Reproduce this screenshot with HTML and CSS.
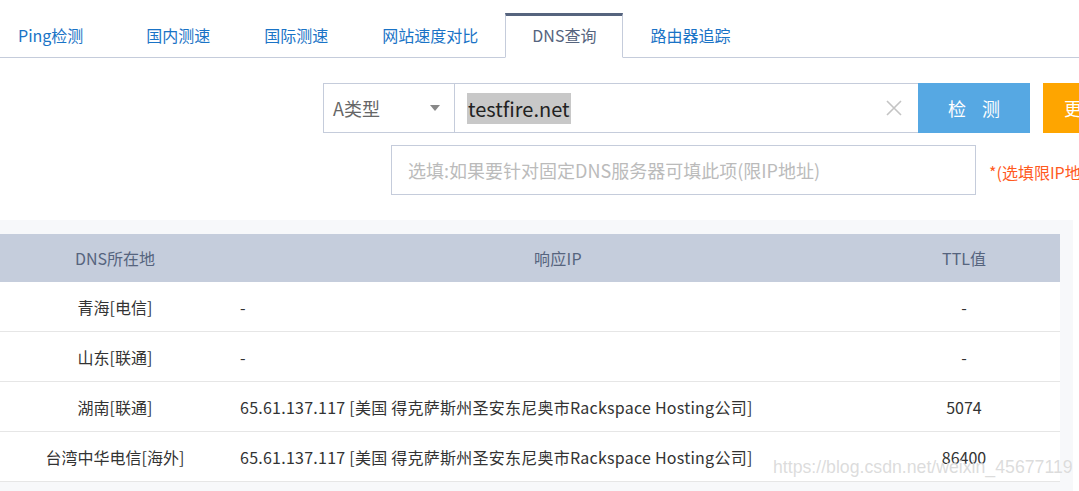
FILE: index.html
```html
<!DOCTYPE html>
<html lang="zh-CN">
<head>
    <meta charset="UTF-8">
    <meta name="viewport" content="width=device-width, initial-scale=1.0">
    <title>DNS查询</title>
    <link rel="stylesheet" href="styles.css">
</head>
<body>
    <ul class="tabs">
        <li class="tab first">Ping检测</li>
        <li class="tab">国内测速</li>
        <li class="tab">国际测速</li>
        <li class="tab">网站速度对比</li>
        <li class="tab active">DNS查询</li>
        <li class="tab">路由器追踪</li>
    </ul>

    <div class="search-row">
        <div class="type-select">
            <span>A类型</span>
            <span class="caret"></span>
        </div>
        <div class="host-input">
            <span class="host-text">testfire.net</span>
            <svg class="clear" width="16" height="16" viewBox="0 0 16 16">
                <path d="M1 1 L15 15 M15 1 L1 15" stroke="#c4c4c4" stroke-width="1.6" fill="none"/>
            </svg>
        </div>
        <button class="btn-check">检 测</button>
        <button class="btn-more">更多</button>
    </div>

    <div class="dns-row">
        <div class="dns-input">选填:如果要针对固定DNS服务器可填此项(限IP地址)</div>
        <span class="dns-note">*(选填限IP地址)</span>
    </div>

    <div class="result-box">
        <table class="result">
            <thead>
                <tr>
                    <th class="c-loc">DNS所在地</th>
                    <th class="c-ip">响应IP</th>
                    <th class="c-ttl">TTL值</th>
                </tr>
            </thead>
            <tbody>
                <tr>
                    <td class="c-loc">青海[电信]</td>
                    <td class="c-ip">-</td>
                    <td class="c-ttl">-</td>
                </tr>
                <tr>
                    <td class="c-loc">山东[联通]</td>
                    <td class="c-ip">-</td>
                    <td class="c-ttl">-</td>
                </tr>
                <tr>
                    <td class="c-loc">湖南[联通]</td>
                    <td class="c-ip">65.61.137.117 [美国 得克萨斯州圣安东尼奥市Rackspace Hosting公司]</td>
                    <td class="c-ttl">5074</td>
                </tr>
                <tr>
                    <td class="c-loc">台湾中华电信[海外]</td>
                    <td class="c-ip">65.61.137.117 [美国 得克萨斯州圣安东尼奥市Rackspace Hosting公司]</td>
                    <td class="c-ttl">86400</td>
                </tr>
            </tbody>
        </table>
    </div>

    <div class="watermark">https://blog.csdn.net/weixin_45677119</div>
</body>
</html>
```

FILE: styles.css
```css
html, body {
    margin: 0;
    padding: 0;
    background: #fff;
    overflow: hidden;
}
body {
    font-family: "Noto Sans CJK SC", "Noto Sans", sans-serif;
    font-size: 16px;
    color: #333;
    position: relative;
    height: 491px;
}
.tabs {
    list-style: none;
    margin: 0;
    padding: 13px 0 0 0;
    display: flex;
    border-bottom: 1px solid #c5ccdb;
    height: 58px;
    box-sizing: border-box;
}
.tab {
    padding: 0 26px;
    height: 45px;
    line-height: 39px;
    color: #1a73c6;
    box-sizing: border-box;
    border: 1px solid transparent;
    border-top-width: 3px;
    flex-shrink: 0;
}
.tab.first {
    padding-left: 17px;
    padding-right: 35px;
}
.tab.active {
    color: #56647e;
    border-color: #c5ccdb;
    border-top-color: #56647e;
    border-bottom-color: #fff;
    background: #fff;
}
.search-row {
    display: flex;
    margin: 25px 0 0 323px;
    height: 50px;
    white-space: nowrap;
}
.type-select {
    width: 132px;
    flex-shrink: 0;
    box-sizing: border-box;
    border: 1px solid #c5ccdb;
    display: flex;
    align-items: center;
    justify-content: space-between;
    padding: 0 14px 0 9px;
    font-size: 18px;
    color: #666;
}
.caret {
    width: 0;
    height: 0;
    border-left: 5px solid transparent;
    border-right: 5px solid transparent;
    border-top: 6px solid #888;
}
.host-input {
    width: 463px;
    flex-shrink: 0;
    box-sizing: border-box;
    border: 1px solid #c5ccdb;
    border-left: none;
    border-right: none;
    display: flex;
    align-items: center;
    justify-content: space-between;
    padding: 0 16px 0 12px;
}
.host-text {
    font-size: 20px;
    color: #222;
    background: #c8c8c8;
    line-height: 31px;
    padding: 0 1px;
}
.btn-check, .btn-more {
    border: none;
    color: #fff;
    font-family: inherit;
    font-size: 18px;
    height: 50px;
    padding: 0;
    flex-shrink: 0;
    cursor: pointer;
}
.btn-check {
    width: 112px;
    background: #56a8e3;
    letter-spacing: 6px;
    text-indent: 6px;
}
.btn-more {
    width: 112px;
    margin-left: 13px;
    background: #fea500;
    text-align: left;
    padding-left: 21px;
}
.dns-row {
    display: flex;
    align-items: center;
    margin: 12px 0 0 391px;
    white-space: nowrap;
}
.dns-input {
    width: 585px;
    flex-shrink: 0;
    height: 50px;
    box-sizing: border-box;
    border: 1px solid #c5ccdb;
    padding-left: 16px;
    line-height: 48px;
    font-size: 18px;
    color: #bbb;
}
.dns-note {
    margin-left: 13px;
    color: #ff5a1e;
    font-size: 16px;
    margin-top: 4px;
    flex-shrink: 0;
}
.result-box {
    margin-top: 25px;
    width: 1073px;
    background: #f7f8fa;
    padding: 14px 13px 0 0;
    box-sizing: border-box;
    height: 280px;
}
.result {
    width: 1060px;
    border-collapse: collapse;
    table-layout: fixed;
    background: #fff;
}
.result th {
    background: #c5cddc;
    color: #56647e;
    font-weight: normal;
    height: 48px;
    padding: 0;
}
.result td {
    height: 49px;
    padding: 0;
    border-bottom: 1px solid #e6e6e6;
}
.c-loc {
    width: 230px;
    text-align: center;
}
.c-ip {
    width: 646px;
    text-align: left;
    padding-left: 10px !important;
    box-sizing: border-box;
    letter-spacing: 0.25px;
}
.result th.c-ip {
    text-align: center;
}
.c-ttl {
    text-align: center;
    padding-right: 8px !important;
}
.watermark {
    position: absolute;
    left: 773px;
    top: 457px;
    font-family: "Liberation Sans", Arial, sans-serif;
    font-size: 17.7px;
    color: rgba(205, 205, 205, 0.7);
    text-shadow: 0 0 1px rgba(255, 255, 255, 0.9);
    white-space: nowrap;
}
```
